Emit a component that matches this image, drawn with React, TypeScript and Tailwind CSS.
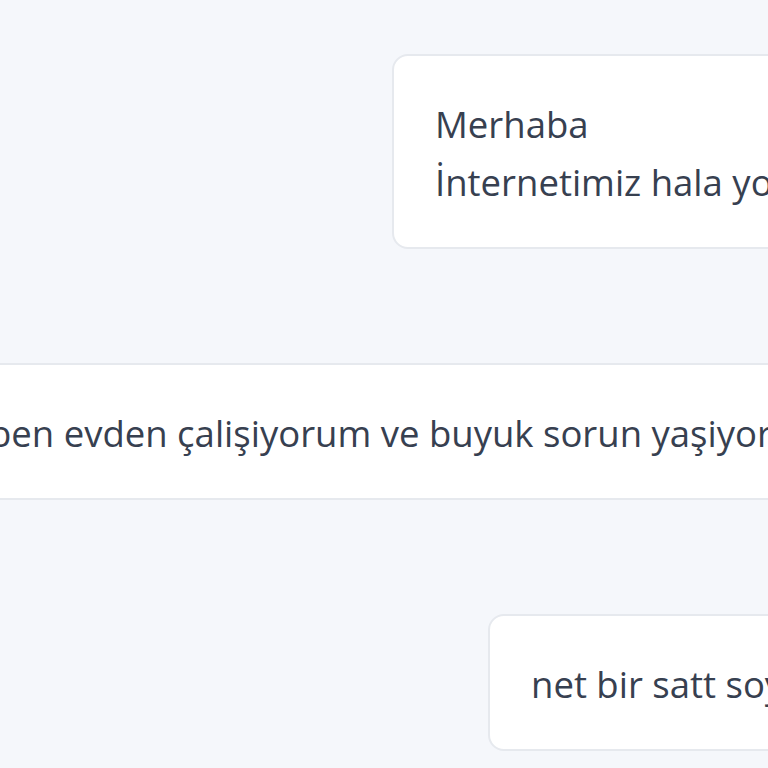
import React from 'react'

type Msg = { id: number; lines: string[]; offset: string }

const MESSAGES: Msg[] = [
  { id: 1, lines: ['Merhaba', 'İnternetimiz hala yok'], offset: 'ml-[392px]' },
  { id: 2, lines: ['ben evden çalişiyorum ve buyuk sorun yaşiyorum'], offset: 'ml-[-54px]' },
  { id: 3, lines: ['net bir satt soyleyin'], offset: 'ml-[488px]' },
]

export default function App() {
  return (
    <div className="w-[768px] h-[768px] overflow-hidden bg-[#f5f7fb] font-['Open_Sans','Noto_Sans',sans-serif] text-[#374050]">
      <div className="flex flex-col gap-[114px] pt-[54px]">
        {MESSAGES.map((m) => (
          <div
            key={m.id}
            className={`${m.offset} w-max shrink-0 rounded-[16px] border-2 border-[#e6e9ee] bg-white px-[41px] pt-[39px] pb-[36px] text-[36.5px] leading-[58px] whitespace-nowrap`}
          >
            {m.lines.map((l, i) => (
              <div key={i}>{l}</div>
            ))}
          </div>
        ))}
      </div>
    </div>
  )
}
